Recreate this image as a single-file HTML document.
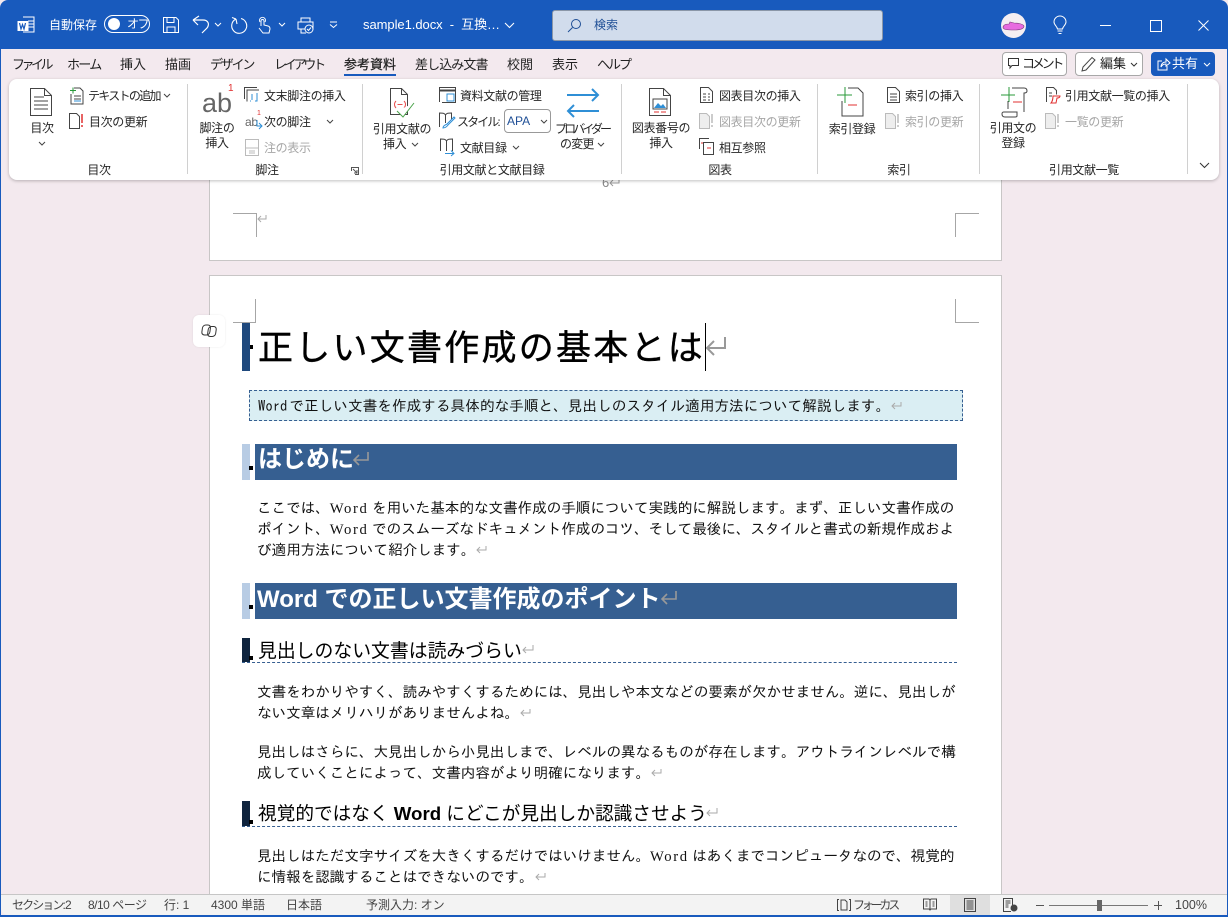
<!DOCTYPE html>
<html lang="ja"><head><meta charset="utf-8"><style>
html,body{margin:0;padding:0;width:1228px;height:917px;overflow:hidden;background:#f3e9ee}
body{position:relative;font-family:"Liberation Sans","Noto Sans CJK JP",sans-serif;color:#262626}
.t{position:absolute;white-space:nowrap;font-size:12px;line-height:16px;letter-spacing:-.35px}
.tab{position:absolute;white-space:nowrap;font-size:13px;line-height:16px;color:#222}
.s{position:absolute;white-space:nowrap;font-size:12px;line-height:16px;top:897px;color:#444}
.c{text-align:center;transform:translateX(-50%)}
.b{position:absolute}
svg{position:absolute;overflow:visible;fill:none;stroke:#444;stroke-width:1}
svg.r{position:static;display:inline-block;margin-left:1px}
.w{color:#fff}
.g{color:#a6a6a6}
.body{position:absolute;white-space:nowrap;font-family:"Liberation Serif","IPAGothic",sans-serif;font-size:14.67px;line-height:21px;letter-spacing:-.1px;color:#111}
.body i{font-style:normal;letter-spacing:1.600px}
.sep{position:absolute;top:84px;width:1px;height:90px;background:#d0d0d0}
.h1bar{position:absolute;left:255px;width:702px;height:36px;background:#365f91}
.h{position:absolute;white-space:nowrap;font-weight:bold;color:#fff;font-size:24px;line-height:36px;font-family:"Liberation Sans","Noto Sans CJK JP",sans-serif}
.h2{position:absolute;white-space:nowrap;font-size:18.67px;line-height:26px;color:#000;font-family:"Liberation Sans","Noto Sans CJK JP",sans-serif}
</style></head><body>

<!-- title bar -->
<div class="b" style="left:0;top:0;width:1228px;height:49px;background:#185abd;border-radius:8px 8px 0 0"></div>
<div class="b" style="left:0;top:49px;width:1px;height:868px;background:#185abd"></div>
<div class="b" style="right:0;top:49px;width:1px;height:868px;background:#185abd"></div>
<div class="b" style="left:0;top:915px;width:1228px;height:2px;background:#185abd"></div>

<svg style="left:17px;top:16px" width="20" height="18" viewBox="0 0 20 18"><path d="M6 1h11v15H6" stroke="#fff"/><path d="M11 5h6M11 8h6M11 11h6" stroke="#fff"/><rect x="0.5" y="5" width="11" height="10" fill="#fff" stroke="none"/><path d="M2.500 7l1.500 6 1.500-4.500 1.500 4.500 1.500-6" stroke="#185abd" stroke-width="1.200"/></svg>
<div class="t w" style="left:49px;top:17px;letter-spacing:0">自動保存</div>
<div class="b" style="left:104px;top:15px;width:46px;height:18px;border:1.300px solid #fff;border-radius:10px;box-sizing:border-box"></div>
<div class="b" style="left:108px;top:18px;width:12px;height:12px;background:#fff;border-radius:50%"></div>
<div class="t w" style="left:127px;top:16px;font-size:12px;letter-spacing:-1.500px">オフ</div>
<svg style="left:163px;top:17px" width="16" height="16" viewBox="0 0 16 16"><path d="M.5.500h12.500l2.500 2.500v12.500H.5zM4 .5v5h7v-5M4 15.500v-5.500h8v5.500" stroke="#fff"/></svg>
<svg style="left:192px;top:15px" width="18" height="18" viewBox="0 0 18 18"><path d="M1 5h10c5 0 7 4 4 8l-5 5M1 5l6-4M1 5l5 5" stroke="#fff" stroke-width="1.200"/></svg>
<svg style="left:214px;top:22px" width="8" height="5" viewBox="0 0 8 5"><path d="M1 1l3 3 3-3" stroke="#fff"/></svg>
<svg style="left:230px;top:17px" width="18" height="17" viewBox="0 0 18 17"><path d="M6 2A7.500 7.500 0 1 0 11 1.500M6 2l1 5M6 2L2 .5" stroke="#fff" stroke-width="1.100"/></svg>
<svg style="left:258px;top:17px" width="13" height="17" viewBox="0 0 13 17"><path d="M3 9V4a1.500 1.500 0 0 1 3 0v4l4 1c2 .5 2 2 2 3l-1 4H5L1 11M2 5a3 3 0 1 1 5 0" stroke="#fff"/></svg>
<svg style="left:278px;top:22px" width="8" height="5" viewBox="0 0 8 5"><path d="M1 1l3 3 3-3" stroke="#fff"/></svg>
<svg style="left:297px;top:17px" width="18" height="17" viewBox="0 0 18 17"><path d="M4 5V1h9v4M1 5h15v7H1zM4 12v4h5" stroke="#fff"/><circle cx="12" cy="12" r="4" fill="#185abd" stroke="#fff"/><path d="M10 12l1.500 1.500 2.500-3" stroke="#fff"/></svg>
<svg style="left:329px;top:21px" width="9" height="7" viewBox="0 0 9 7"><path d="M1 1h7M1 3.500l3.500 3 3.500-3" stroke="#fff"/></svg>
<div class="t w" style="left:363px;top:17px;font-size:13px;letter-spacing:-.05px">sample1.docx &nbsp;-&nbsp; 互換…</div>
<svg style="left:504px;top:22px" width="11" height="7" viewBox="0 0 11 7"><path d="M1 1l4.500 4.500L10 1" stroke="#fff" stroke-width="1.100"/></svg>

<div class="b" style="left:552px;top:10px;width:331px;height:31px;background:#d1dcec;border:1px solid #8b97a8;border-radius:3px;box-sizing:border-box"></div>
<svg style="left:567px;top:18px" width="15" height="15" viewBox="0 0 15 15"><circle cx="9" cy="6" r="4.500" stroke="#1f4f96"/><path d="M5.500 9.500L1 14" stroke="#1f4f96"/></svg>
<div class="t" style="left:594px;top:17px;color:#1f4f96;font-size:12px;letter-spacing:0">検索</div>

<div class="b" style="left:1001px;top:13px;width:25px;height:25px;background:#f4eef2;border-radius:50%"></div>
<svg style="left:1002px;top:20px" width="24" height="12" viewBox="0 0 24 12"><path d="M1 7c1-3 4-3 6-3l1-2 4 1c4 0 9 1 10 3 0 3-4 4-10 4S1 10 1 7z" fill="#e86be0" stroke="#7a3a7a" stroke-width=".6"/></svg>
<svg style="left:1053px;top:16px" width="14" height="19" viewBox="0 0 14 19"><path d="M4.500 13C4 10 1 9 1 6a6 6 0 0 1 12 0c0 3-3 4-3.500 7zM4.500 15h5M5.500 17.500h3" stroke="#fff"/></svg>
<div class="b" style="left:1100px;top:25px;width:11px;height:1px;background:#fff"></div>
<div class="b" style="left:1150px;top:20px;width:10px;height:10px;border:1px solid #fff"></div>
<svg style="left:1198px;top:20px" width="11" height="11" viewBox="0 0 11 11"><path d="M.5.500l10 10M10.500.500l-10 10" stroke="#fff"/></svg>

<!-- tabs -->
<div class="tab" style="left:12px;top:57px;letter-spacing:-3.500px">ファイル</div>
<div class="tab" style="left:67px;top:57px;letter-spacing:-1.700px">ホーム</div>
<div class="tab" style="left:120px;top:57px">挿入</div>
<div class="tab" style="left:165px;top:57px">描画</div>
<div class="tab" style="left:210px;top:57px;letter-spacing:-2.200px">デザイン</div>
<div class="tab" style="left:274px;top:57px;letter-spacing:-3.200px">レイアウト</div>
<div class="tab" style="left:344px;top:57px;-webkit-text-stroke:.25px #222">参考資料</div>
<div class="b" style="left:344px;top:74px;width:52px;height:2px;background:#185abd"></div>
<div class="tab" style="left:415px;top:57px;letter-spacing:-.9px">差し込み文書</div>
<div class="tab" style="left:507px;top:57px">校閲</div>
<div class="tab" style="left:552px;top:57px">表示</div>
<div class="tab" style="left:597px;top:57px;letter-spacing:-2px">ヘルプ</div>

<div class="b" style="left:1002px;top:52px;width:65px;height:24px;background:#fff;border:1px solid #a8a8a8;border-radius:4px;box-sizing:border-box"></div>
<svg style="left:1008px;top:58px" width="12" height="12" viewBox="0 0 12 12"><path d="M.5.500h10v7H4l-2 2.500v-2.500H.5z" stroke="#333"/></svg>
<div class="tab" style="left:1022px;top:56px;letter-spacing:-3.200px">コメント</div>
<div class="b" style="left:1075px;top:52px;width:68px;height:24px;background:#fff;border:1px solid #a8a8a8;border-radius:4px;box-sizing:border-box"></div>
<svg style="left:1081px;top:56px" width="15" height="16" viewBox="0 0 15 16"><path d="M1 15l1-4L11 1.500l3 2.500L5 14z" stroke="#444"/></svg>
<div class="tab" style="left:1100px;top:56px">編集</div>
<svg style="left:1130px;top:62px" width="8" height="5" viewBox="0 0 8 5"><path d="M1 1l3 3 3-3" stroke="#333"/></svg>
<div class="b" style="left:1151px;top:52px;width:64px;height:24px;background:#185abd;border-radius:4px"></div>
<svg style="left:1157px;top:58px" width="13" height="13" viewBox="0 0 13 13"><path d="M5 3H1v9h9V8M4 9c0-3 2-5 5-5V1l4 4-4 3V6c-2 0-4 1-5 3z" stroke="#fff"/></svg>
<div class="tab w" style="left:1172px;top:56px;color:#fff">共有</div>
<svg style="left:1203px;top:62px" width="8" height="5" viewBox="0 0 8 5"><path d="M1 1l3 3 3-3" stroke="#fff"/></svg>

<!-- page above -->
<div class="b" style="left:209px;top:170px;width:793px;height:91px;background:#fff;border:1px solid #c8c6c6;box-sizing:border-box"></div>
<div class="t" style="left:602px;top:175px;color:#888;font-size:13px">6</div>
<svg style="left:609px;top:179px" width="11" height="8" viewBox="0 0 11 8"><path d="M10 0v4H1M4 1L1 4l3 3" stroke="#999"/></svg>
<div class="b" style="left:233px;top:213px;width:23px;height:1px;background:#a6a6a6"></div>
<div class="b" style="left:256px;top:213px;width:1px;height:24px;background:#a6a6a6"></div>
<div class="b" style="left:955px;top:213px;width:24px;height:1px;background:#a6a6a6"></div>
<div class="b" style="left:955px;top:213px;width:1px;height:24px;background:#a6a6a6"></div>
<svg style="left:257px;top:215px" width="10" height="8" viewBox="0 0 10 8"><path d="M9 0v4H1M4 1L1 4l3 3" stroke="#aaa"/></svg>

<!-- ribbon -->
<div class="b" style="left:9px;top:79px;width:1210px;height:101px;background:#fff;border-radius:8px;box-shadow:0 1px 3px rgba(0,0,0,.25)"></div>
<div class="sep" style="left:187px"></div>
<div class="sep" style="left:362px"></div>
<div class="sep" style="left:621px"></div>
<div class="sep" style="left:817px"></div>
<div class="sep" style="left:979px"></div>
<div class="sep" style="left:1187px"></div>

<!-- 目次 group -->
<svg style="left:30px;top:88px" width="22" height="28" viewBox="0 0 22 28"><path d="M.5.500h14l7 7v20H.5zM14.500.500v7h7M4 9h10M4 13h14M4 17h14M4 21h14" stroke="#444"/></svg>
<div class="t c" style="left:42px;top:120px">目次</div>
<svg style="left:38px;top:141px" width="8" height="5" viewBox="0 0 8 5"><path d="M1 1l3 3 3-3" stroke="#444"/></svg>
<svg style="left:69px;top:87px" width="15" height="18" viewBox="0 0 15 18"><path d="M5 1h6l3 3v13H2V7M5 9h7M5 12h7" stroke="#444"/><path d="M4 .5v6M1 3.500h6" stroke="#2a9a3a"/><path d="M5 14h7" stroke="#2f8fd6"/></svg>
<div class="t" style="left:88px;top:88px;letter-spacing:-1.700px">テキストの追加</div>
<svg style="left:163px;top:93px" width="8" height="5" viewBox="0 0 8 5"><path d="M1 1l3 3 3-3" stroke="#444"/></svg>
<svg style="left:69px;top:113px" width="15" height="16" viewBox="0 0 15 16"><path d="M.5.500h7l3 3v12H.5z" stroke="#444"/><path d="M13 1v9M13 12v2" stroke="#e03030" stroke-width="1.500"/></svg>
<div class="t" style="left:89px;top:114px">目次の更新</div>
<div class="t c" style="left:99px;top:162px">目次</div>

<!-- 脚注 group -->
<div class="t" style="left:202px;top:86px;font-size:27px;line-height:34px;color:#666;letter-spacing:0">ab</div>
<div class="t" style="left:228px;top:83px;font-size:10px;line-height:12px;color:#e03030">1</div>
<div class="t c" style="left:217px;top:121px;line-height:15px;text-align:center">脚注の<br>挿入</div>
<svg style="left:244px;top:87px" width="16" height="16" viewBox="0 0 16 16"><path d="M.5 12V.5H13M3 14.500V3h12" stroke="#444"/><path d="M8 7v6M7 14h-1M13 6v8h-2" stroke="#2f8fd6"/></svg>
<div class="t" style="left:264px;top:88px">文末脚注の挿入</div>
<div class="t" style="left:245px;top:114px;font-size:12px;color:#666">ab</div>
<div class="t" style="left:257px;top:110px;font-size:7px;line-height:8px;color:#e03030">1</div>
<svg style="left:252px;top:120px" width="11" height="10" viewBox="0 0 11 10"><path d="M5 0v6h5M7 3l3 3-3 3" stroke="#2f8fd6"/></svg>
<div class="t" style="left:264px;top:114px">次の脚注</div>
<svg style="left:326px;top:119px" width="8" height="5" viewBox="0 0 8 5"><path d="M1 1l3 3 3-3" stroke="#444"/></svg>
<svg style="left:245px;top:139px" width="15" height="17" viewBox="0 0 15 17"><path d="M.5.500h13v16H.5zM.5 9h13M4 12h6M4 14h6" stroke="#bbb"/></svg>
<div class="t g" style="left:264px;top:140px">注の表示</div>
<div class="t c" style="left:267px;top:162px">脚注</div>
<svg style="left:351px;top:167px" width="8" height="8" viewBox="0 0 8 8"><path d="M.5 4V.5H7.500v7H4M2 2l4 4M6 3v3H3" stroke="#555"/></svg>

<!-- 引用 group -->
<svg style="left:390px;top:88px" width="28" height="30" viewBox="0 0 28 30"><path d="M.5.500h11l6 6v20H.5zM11.500.500v6h6" stroke="#444"/><path d="M6 13c-2 2-2 5 0 7M14 13c2 2 2 5 0 7M7.500 16.500h5" stroke="#e85050"/><path d="M7 23l6 6L24 15" stroke="#4aa34a" fill="#fff"/></svg>
<div class="t c" style="left:402px;top:121px">引用文献の</div>
<div class="t" style="left:383px;top:136px">挿入</div>
<svg style="left:411px;top:142px" width="8" height="5" viewBox="0 0 8 5"><path d="M1 1l3 3 3-3" stroke="#444"/></svg>
<svg style="left:439px;top:87px" width="17" height="16" viewBox="0 0 17 16"><path d="M.5 15V.5h16v15H3" stroke="#444"/><path d="M1 3.500h15" stroke="#444" stroke-width="2"/><path d="M8 7h7v7H8z" stroke="#2f8fd6"/></svg>
<div class="t" style="left:460px;top:88px">資料文献の管理</div>
<svg style="left:439px;top:112px" width="18" height="18" viewBox="0 0 18 18"><path d="M.5 15V1c3 0 5 0 6 2 1-2 3-2 6-2v6M6.500 3v8" stroke="#444"/><path d="M4 16c0-3 3-3 4-4l7-7 1 1-7 7c-1 1-2 3-5 3z" stroke="#2f8fd6"/></svg>
<div class="t" style="left:457px;top:114px;letter-spacing:-1.900px">スタイル:</div>
<div class="b" style="left:504px;top:109px;width:47px;height:24px;border:1px solid #999;border-radius:4px;box-sizing:border-box;background:#fff"></div>
<div class="t" style="left:507px;top:113px;color:#1f4f96;font-size:12px;letter-spacing:0">APA</div>
<svg style="left:540px;top:119px" width="8" height="5" viewBox="0 0 8 5"><path d="M1 1l3 3 3-3" stroke="#444"/></svg>
<svg style="left:440px;top:138px" width="17" height="18" viewBox="0 0 17 18"><path d="M.5 13V1c3 0 5 0 6 2 1-2 3-2 6-2v12M6.500 3v10" stroke="#444"/><path d="M5 15.500h9M11 12.500l3 3-3 2.500" stroke="#2f8fd6"/></svg>
<div class="t" style="left:460px;top:140px">文献目録</div>
<svg style="left:512px;top:145px" width="8" height="5" viewBox="0 0 8 5"><path d="M1 1l3 3 3-3" stroke="#444"/></svg>
<svg style="left:566px;top:88px" width="34" height="30" viewBox="0 0 34 30"><path d="M1 7h31M26 1l6 6-6 6M33 23H2M8 17l-6 6 6 6" stroke="#2f8fd6" stroke-width="2"/></svg>
<div class="t" style="left:555px;top:121px;letter-spacing:-2.900px">プロバイダー</div>
<div class="t" style="left:560px;top:136px;letter-spacing:-.8px">の変更</div>
<svg style="left:597px;top:142px" width="8" height="5" viewBox="0 0 8 5"><path d="M1 1l3 3 3-3" stroke="#444"/></svg>
<div class="t c" style="left:492px;top:162px">引用文献と文献目録</div>

<!-- 図表 group -->
<svg style="left:649px;top:88px" width="24" height="28" viewBox="0 0 24 28"><path d="M.5.500h14l7 7v20H.5zM14.500.500v7h7" stroke="#444"/><rect x="4" y="11" width="14" height="10" stroke="#444"/><path d="M5 20l4-5 3 3 2-2 3 4z" fill="#2f8fd6" stroke="none"/><path d="M5 24h5M12 24h5" stroke="#e03030"/></svg>
<div class="t c" style="left:661px;top:121px;line-height:15px;text-align:center">図表番号の<br>挿入</div>
<svg style="left:700px;top:87px" width="13" height="16" viewBox="0 0 13 16"><path d="M.5.500h8l4 4v11H.5zM3 7h3M8 7h2M3 10h3M8 10h2M3 13h3M8 13h2" stroke="#444"/></svg>
<div class="t" style="left:719px;top:88px">図表目次の挿入</div>
<svg style="left:699px;top:113px" width="15" height="16" viewBox="0 0 15 16"><path d="M.5.500h7l3 3v12H.5z" stroke="#bbb" fill="#eee"/><path d="M13 1v9M13 12v2" stroke="#bbb" stroke-width="1.500"/></svg>
<div class="t g" style="left:719px;top:114px">図表目次の更新</div>
<svg style="left:699px;top:138px" width="15" height="17" viewBox="0 0 15 17"><path d="M.5 11V.5H10M4.500 4.500h10v12h-10z" stroke="#444"/><path d="M2 5h2M8 10h4" stroke="#e03030"/></svg>
<div class="t" style="left:719px;top:140px">相互参照</div>
<div class="t c" style="left:720px;top:162px">図表</div>

<!-- 索引 group -->
<svg style="left:836px;top:87px" width="28" height="30" viewBox="0 0 28 30"><path d="M12 1h10l5 5v23H6V14" stroke="#444"/><path d="M9 0v16M1 8h15" stroke="#2a9a3a"/><path d="M12 18h9" stroke="#e03030"/></svg>
<div class="t c" style="left:852px;top:121px">索引登録</div>
<svg style="left:887px;top:87px" width="13" height="16" viewBox="0 0 13 16"><path d="M.5.500h8l4 4v11H.5zM3 7h7M3 10h7M3 13h7" stroke="#444"/></svg>
<div class="t" style="left:905px;top:88px">索引の挿入</div>
<svg style="left:885px;top:113px" width="15" height="16" viewBox="0 0 15 16"><path d="M.5.500h7l3 3v12H.5z" stroke="#bbb" fill="#eee"/><path d="M13 1v9M13 12v2" stroke="#bbb" stroke-width="1.500"/></svg>
<div class="t g" style="left:905px;top:114px">索引の更新</div>
<div class="t c" style="left:899px;top:162px">索引</div>

<!-- 引用文献一覧 group -->
<svg style="left:1000px;top:87px" width="28" height="31" viewBox="0 0 28 31"><path d="M12 1h12c2 0 3 1 3 3s-2 2-3 2v19M4 25h13v4c0 1-1 1-2 1H5c-2 0-3-1-3-3s1-2 2-2M8 22V14" stroke="#444"/><path d="M9 0v15M1 8h14" stroke="#2a9a3a"/><path d="M13 15h9" stroke="#e03030"/></svg>
<div class="t c" style="left:1013px;top:121px;line-height:15px;text-align:center">引用文の<br>登録</div>
<svg style="left:1046px;top:87px" width="15" height="17" viewBox="0 0 15 17"><path d="M.5 15V.5h7l3 3v4M3 6h3M3 9h3" stroke="#444"/><path d="M7 9h7c0 2-2 2-3 2l-1 5H5c1-1 2-4 2-7z" stroke="#e03030"/></svg>
<div class="t" style="left:1065px;top:88px">引用文献一覧の挿入</div>
<svg style="left:1045px;top:113px" width="15" height="16" viewBox="0 0 15 16"><path d="M.5.500h7l3 3v12H.5z" stroke="#bbb" fill="#eee"/><path d="M13 1v9M13 12v2" stroke="#bbb" stroke-width="1.500"/></svg>
<div class="t g" style="left:1065px;top:114px">一覧の更新</div>
<div class="t c" style="left:1084px;top:162px">引用文献一覧</div>
<svg style="left:1199px;top:162px" width="11" height="7" viewBox="0 0 11 7"><path d="M1 1l4.500 4.500L10 1" stroke="#333"/></svg>

<!-- main page -->
<div class="b" style="left:209px;top:275px;width:793px;height:625px;background:#fff;border:1px solid #c8c6c6;border-bottom:0;box-sizing:border-box"></div>
<div class="b" style="left:255px;top:299px;width:1px;height:24px;background:#a6a6a6"></div>
<div class="b" style="left:233px;top:322px;width:23px;height:1px;background:#a6a6a6"></div>
<div class="b" style="left:955px;top:299px;width:1px;height:24px;background:#a6a6a6"></div>
<div class="b" style="left:955px;top:322px;width:24px;height:1px;background:#a6a6a6"></div>

<div class="b" style="left:193px;top:315px;width:32px;height:32px;background:#fff;border-radius:6px;box-shadow:0 0 2px rgba(0,0,0,.08)"></div>
<svg style="left:201px;top:324px" width="16" height="14" viewBox="0 0 16 14"><rect x="1" y="1" width="8" height="10" rx="3" stroke="#333" transform="skewX(-8) translate(1 0)"/><rect x="7" y="2.500" width="8" height="10" rx="3" stroke="#333" transform="skewX(-8) translate(1 0)"/></svg>

<!-- title -->
<div class="b" style="left:242px;top:323px;width:8px;height:48px;background:#1f497d"></div>
<div class="b" style="left:250px;top:345px;width:3px;height:4px;background:#000"></div>
<div class="t" style="left:258px;top:325px;font-size:35px;line-height:48px;letter-spacing:2.250px;color:#000;-webkit-text-stroke:.4px #000;font-family:'Liberation Sans','Noto Sans CJK JP',sans-serif">正しい文書作成の基本とは</div>
<svg style="left:705px;top:337px" width="22" height="20" viewBox="0 0 22 20"><path d="M20 0v11H2M9 4l-7 7 7 7" stroke="#999" stroke-width="2"/></svg>
<div class="b" style="left:705px;top:323px;width:1px;height:48px;background:#000"></div>

<!-- subtitle -->
<div class="b" style="left:249px;top:390px;width:714px;height:31px;background:#daeef3;border:1px dashed #365f91;box-sizing:border-box"></div>
<div class="body" style="left:258px;top:395px;letter-spacing:0;font-family:'IPAGothic',monospace"><span style="margin-right:2px">Word</span>で正しい文書を作成する具体的な手順と、見出しのスタイル適用方法について解説します。<svg class="r" width="11" height="9" viewBox="0 0 11 9"><path d="M10 0v4H1M4 1L1 4l3 3" stroke="#aaa"/></svg></div>

<!-- heading 1 -->
<div class="b" style="left:242px;top:444px;width:8px;height:36px;background:#b8cce4"></div>
<div class="b" style="left:249px;top:466px;width:4px;height:4px;background:#000"></div>
<div class="h1bar" style="top:444px"></div>
<div class="h" style="left:258px;top:442px">はじめに</div>
<svg style="left:353px;top:452px" width="16" height="14" viewBox="0 0 16 14"><path d="M15 0v8H1M6 3L1 8l5 5" stroke="#999" stroke-width="1.600"/></svg>

<div class="body" style="left:257px;top:499px">ここでは、<i>Word</i> を用いた基本的な文書作成の手順について実践的に解説します。まず、正しい文書作成の</div>
<div class="body" style="left:257px;top:520px">ポイント、<i>Word</i> でのスムーズなドキュメント作成のコツ、そして最後に、スタイルと書式の新規作成およ</div>
<div class="body" style="left:257px;top:541px">び適用方法について紹介します。<svg class="r" width="11" height="9" viewBox="0 0 11 9"><path d="M10 0v4H1M4 1L1 4l3 3" stroke="#aaa"/></svg></div>

<!-- heading 2 -->
<div class="b" style="left:242px;top:583px;width:8px;height:36px;background:#b8cce4"></div>
<div class="b" style="left:249px;top:605px;width:4px;height:4px;background:#000"></div>
<div class="h1bar" style="top:583px"></div>
<div class="h" style="left:257px;top:582px">Word での正しい文書作成のポイント</div>
<svg style="left:661px;top:591px" width="16" height="14" viewBox="0 0 16 14"><path d="M15 0v8H1M6 3L1 8l5 5" stroke="#999" stroke-width="1.600"/></svg>

<!-- heading 3 -->
<div class="b" style="left:242px;top:638px;width:8px;height:24px;background:#0f243e"></div>
<div class="b" style="left:249px;top:656px;width:4px;height:4px;background:#000"></div>
<div class="b" style="left:242px;top:662px;width:715px;border-top:1px dashed #365f91"></div>
<div class="h2" style="left:258px;top:638px;font-size:18.85px">見出しのない文書は読みづらい</div>
<svg style="left:522px;top:645px" width="12" height="10" viewBox="0 0 12 10"><path d="M11 0v5H1M4 2L1 5l3 3" stroke="#aaa"/></svg>

<div class="body" style="left:257px;top:683px">文書をわかりやすく、読みやすくするためには、見出しや本文などの要素が欠かせません。逆に、見出しが</div>
<div class="body" style="left:257px;top:704px">ない文章はメリハリがありませんよね。<svg class="r" width="11" height="9" viewBox="0 0 11 9"><path d="M10 0v4H1M4 1L1 4l3 3" stroke="#aaa"/></svg></div>
<div class="body" style="left:257px;top:743px">見出しはさらに、大見出しから小見出しまで、レベルの異なるものが存在します。アウトラインレベルで構</div>
<div class="body" style="left:257px;top:764px">成していくことによって、文書内容がより明確になります。<svg class="r" width="11" height="9" viewBox="0 0 11 9"><path d="M10 0v4H1M4 1L1 4l3 3" stroke="#aaa"/></svg></div>

<!-- heading 4 -->
<div class="b" style="left:242px;top:801px;width:8px;height:25px;background:#0f243e"></div>
<div class="b" style="left:249px;top:820px;width:4px;height:4px;background:#000"></div>
<div class="b" style="left:242px;top:826px;width:715px;border-top:1px dashed #365f91"></div>
<div class="h2" style="left:258px;top:801px">視覚的ではなく <b>Word</b> にどこが見出しか認識させよう</div>
<svg style="left:706px;top:808px" width="12" height="10" viewBox="0 0 12 10"><path d="M11 0v5H1M4 2L1 5l3 3" stroke="#aaa"/></svg>

<div class="body" style="left:257px;top:847px">見出しはただ文字サイズを大きくするだけではいけません。<i>Word</i> はあくまでコンピュータなので、視覚的</div>
<div class="body" style="left:257px;top:868px">に情報を認識することはできないのです。<svg class="r" width="11" height="9" viewBox="0 0 11 9"><path d="M10 0v4H1M4 1L1 4l3 3" stroke="#aaa"/></svg></div>

<!-- status bar -->
<div class="b" style="left:1px;top:894px;width:1226px;height:21px;background:#f3f3f3;border-top:1px solid #c6c6c6;box-sizing:border-box;border-radius:0 0 7px 7px"></div>
<div class="s" style="left:12px;letter-spacing:-1.900px">セクション:</div>
<div class="s" style="left:65px">2</div>
<div class="s" style="left:88px;letter-spacing:-.5px">8/10 ページ</div>
<div class="s" style="left:164px">行: 1</div>
<div class="s" style="left:211px">4300 単語</div>
<div class="s" style="left:286px">日本語</div>
<div class="s" style="left:366px">予測入力: オン</div>
<svg style="left:837px;top:899px" width="14" height="12" viewBox="0 0 14 12"><path d="M2 .5H.5v11H2M12 .5h1.500v11H12M4 1h4l2 2v8H4z" stroke="#444"/></svg>
<div class="s" style="left:853px;letter-spacing:-3.200px">フォーカス</div>
<svg style="left:923px;top:898px" width="14" height="13" viewBox="0 0 14 13"><path d="M.5 1h5.500l1 1 1-1h5.500v10H8l-1 1-1-1H.5zM7 2v9M2.500 4h2M2.500 6h2M2.500 8h2M9.500 4h2M9.500 6h2M9.500 8h2" stroke="#444"/></svg>
<div class="b" style="left:950px;top:895px;width:40px;height:20px;background:#dfdfdf"></div>
<svg style="left:964px;top:898px" width="12" height="14" viewBox="0 0 12 14"><path d="M.5.500h11v13H.5zM2.500 3h7M2.500 5h7M2.500 7h7M2.500 9h7M2.500 11h7" stroke="#444"/></svg>
<svg style="left:1003px;top:898px" width="15" height="14" viewBox="0 0 15 14"><path d="M8 13.500H.5V.5h9V7M2.500 3h5M2.500 5h5M2.500 7h3M2.500 9h3" stroke="#444"/><circle cx="11" cy="10" r="3.500" fill="#444" stroke="none"/></svg>
<div class="b" style="left:1036px;top:905px;width:8px;height:1px;background:#555"></div>
<div class="b" style="left:1049px;top:905px;width:99px;height:1px;background:#777"></div>
<div class="b" style="left:1097px;top:900px;width:5px;height:11px;background:#666"></div>
<div class="b" style="left:1154px;top:905px;width:8px;height:1px;background:#555"></div>
<div class="b" style="left:1158px;top:901px;width:1px;height:9px;background:#555"></div>
<div class="s" style="left:1175px;font-size:12.500px">100%</div>

</body></html>
